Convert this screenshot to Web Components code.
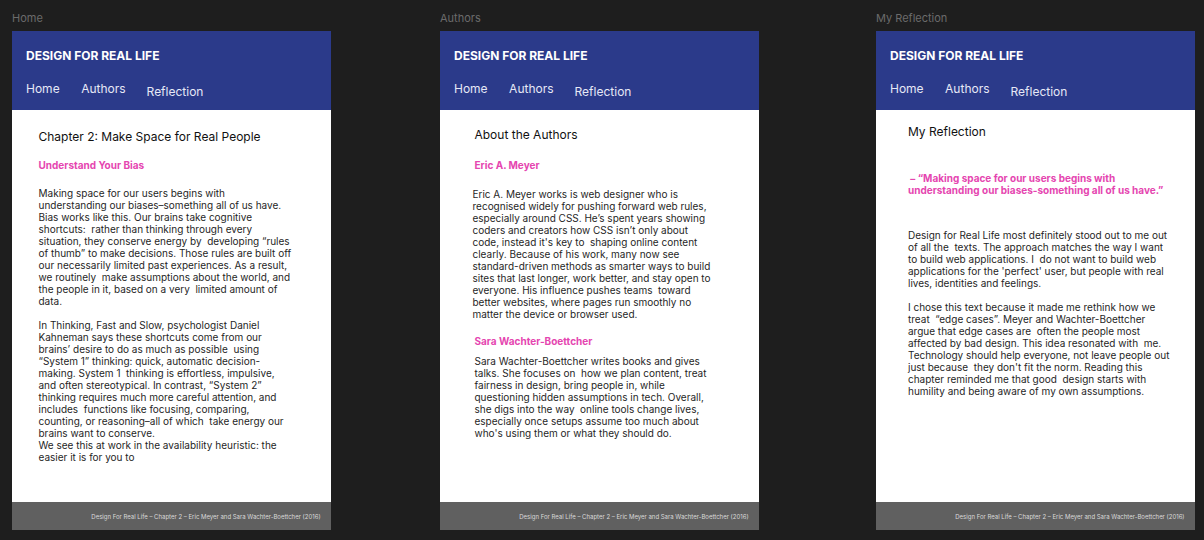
<!DOCTYPE html>
<html lang="en">
<head>
<meta charset="utf-8">
<title>Design For Real Life</title>
<style>
  html, body { margin: 0; background: #1e1e1e; }
  body { width: 1204px; height: 540px; overflow: hidden; font-family: Inter, "Liberation Sans", sans-serif; }
  .canvas { display: flex; align-items: flex-start; padding: 12px 0 0 12px; }
  #authors { margin-left: 109.4px; }
  #reflection { margin-left: 117.4px; }
</style>
</head>
<body>
<div class="canvas">
  <page-frame id="home" label="Home">
    <page-title style="--top: 19px; --left: 26.5px">Chapter 2: Make Space for Real People</page-title>
    <pink-head style="--top: 15px; --left: 26.5px">Understand Your Bias</pink-head>
    <body-copy style="--top: 16px; --left: 26.5px">Making space for our users begins with
understanding our biases–something all of us have.
Bias works like this. Our brains take cognitive
shortcuts:  rather than thinking through every
situation, they conserve energy by  developing “rules
of thumb” to make decisions. Those rules are built off
our necessarily limited past experiences. As a result,
we routinely  make assumptions about the world, and
the people in it, based on a very  limited amount of
data.

In Thinking, Fast and Slow, psychologist Daniel
Kahneman says these shortcuts come from our
brains’ desire to do as much as possible  using
“System 1” thinking: quick, automatic decision-
making. System 1  thinking is effortless, impulsive,
and often stereotypical. In contrast, “System 2”
thinking requires much more careful attention, and
includes  functions like focusing, comparing,
counting, or reasoning–all of which  take energy our
brains want to conserve.
We see this at work in the availability heuristic: the
easier it is for you to</body-copy>
  </page-frame>
  <page-frame id="authors" label="Authors">
    <page-title style="--top: 17px; --left: 34.5px">About the Authors</page-title>
    <pink-head style="--top: 17px; --left: 34.5px">Eric A. Meyer</pink-head>
    <body-copy style="--top: 17px; --left: 32.5px">Eric A. Meyer works is web designer who is
recognised widely for pushing forward web rules,
especially around CSS. He’s spent years showing
coders and creators how CSS isn’t only about
code, instead it's key to  shaping online content
clearly. Because of his work, many now see
standard-driven methods as smarter ways to build
sites that last longer, work better, and stay open to
everyone. His influence pushes teams  toward
better websites, where pages run smoothly no
matter the device or browser used.</body-copy>
    <pink-head style="--top: 15px; --left: 34.5px">Sara Wachter-Boettcher</pink-head>
    <body-copy style="--top: 8px; --left: 34.5px">Sara Wachter-Boettcher writes books and gives
talks. She focuses on  how we plan content, treat
fairness in design, bring people in, while
questioning hidden assumptions in tech. Overall,
she digs into the way  online tools change lives,
especially once setups assume too much about
who's using them or what they should do.</body-copy>
  </page-frame>
  <page-frame id="reflection" label="My Reflection">
    <page-title style="--top: 14px; --left: 32px">My Reflection</page-title>
    <pink-head style="--top: 33px; --left: 32px" class="quote"> – “Making space for our users begins with
understanding our biases-something all of us have.”</pink-head>
    <body-copy style="--top: 33px; --left: 32px">Design for Real Life most definitely stood out to me out
of all the  texts. The approach matches the way I want
to build web applications. I  do not want to build web
applications for the 'perfect' user, but people with real
lives, identities and feelings.

I chose this text because it made me rethink how we
treat  “edge cases”. Meyer and Wachter-Boettcher
argue that edge cases are  often the people most
affected by bad design. This idea resonated with  me.
Technology should help everyone, not leave people out
just because  they don't fit the norm. Reading this
chapter reminded me that good  design starts with
humility and being aware of my own assumptions.</body-copy>
  </page-frame>
</div>
<script>
  class PageFrame extends HTMLElement {
    constructor() {
      super();
      this.attachShadow({ mode: "open" });
      this.shadowRoot.innerHTML = `
        <style>
          :host { display: block; width: 318.6px; flex: none; }
          .label { height: 19px; font-size: 11px; line-height: 12px; color: #6b6b6b; }
          .frame { height: 499px; display: flex; flex-direction: column; background: #fff; }
          main { flex: 1; min-height: 0; display: flex; flex-direction: column; }
        </style>
        <div class="label" id="label"></div>
        <div class="frame">
          <site-header></site-header>
          <main><slot></slot></main>
          <site-footer></site-footer>
        </div>
      `;
    }
    connectedCallback() {
      this.shadowRoot.getElementById("label").textContent = this.getAttribute("label");
    }
  }

  class SiteHeader extends HTMLElement {
    constructor() {
      super();
      this.attachShadow({ mode: "open" });
      this.shadowRoot.innerHTML = `
        <style>
          :host { display: block; height: 79px; box-sizing: border-box; padding: 16.5px 14px 0; background: #2b3a8a; color: #fff; }
          .brand { font-size: 12px; line-height: 15px; font-weight: 700; }
          nav { display: flex; margin-top: 18px; font-size: 12px; line-height: 15px; color: #e6e8f6; }
          .authors { margin-left: 21.5px; }
          .reflection { margin: 3px 0 0 21px; }
        </style>
        <div class="brand">DESIGN FOR REAL LIFE</div>
        <nav>
          <span>Home</span>
          <span class="authors">Authors</span>
          <span class="reflection">Reflection</span>
        </nav>
      `;
    }
  }

  class SiteFooter extends HTMLElement {
    constructor() {
      super();
      this.attachShadow({ mode: "open" });
      this.shadowRoot.innerHTML = `
        <style>
          :host { display: flex; align-items: center; justify-content: flex-end; height: 28px; padding-right: 10px; background: #606060; color: #d9d9d9; font-size: 6px; }
        </style>
        Design For Real Life – Chapter 2 – Eric Meyer and Sara Wachter-Boettcher (2016)
      `;
    }
  }

  class PageTitle extends HTMLElement {
    constructor() {
      super();
      this.attachShadow({ mode: "open" });
      this.shadowRoot.innerHTML = `<style>
          :host { display: block; margin: var(--top) 0 0 var(--left); font-size: 12px; line-height: 15px; color: #111; }
        </style><slot></slot>`;
    }
  }

  class PinkHead extends HTMLElement {
    constructor() {
      super();
      this.attachShadow({ mode: "open" });
      this.shadowRoot.innerHTML = `<style>
          :host { display: block; margin: var(--top) 0 0 var(--left); font-size: 10px; line-height: 12px; font-weight: 700; color: #e545b0; white-space: pre; }
        </style><slot></slot>`;
    }
  }

  class BodyCopy extends HTMLElement {
    constructor() {
      super();
      this.attachShadow({ mode: "open" });
      this.shadowRoot.innerHTML = `<style>
          :host { display: block; margin: var(--top) 0 0 var(--left); font-size: 10px; line-height: 12px; color: #1f1f1f; white-space: pre; }
        </style><slot></slot>`;
    }
  }

  customElements.define("page-frame", PageFrame);
  customElements.define("site-header", SiteHeader);
  customElements.define("site-footer", SiteFooter);
  customElements.define("page-title", PageTitle);
  customElements.define("pink-head", PinkHead);
  customElements.define("body-copy", BodyCopy);
</script>
</body>
</html>
